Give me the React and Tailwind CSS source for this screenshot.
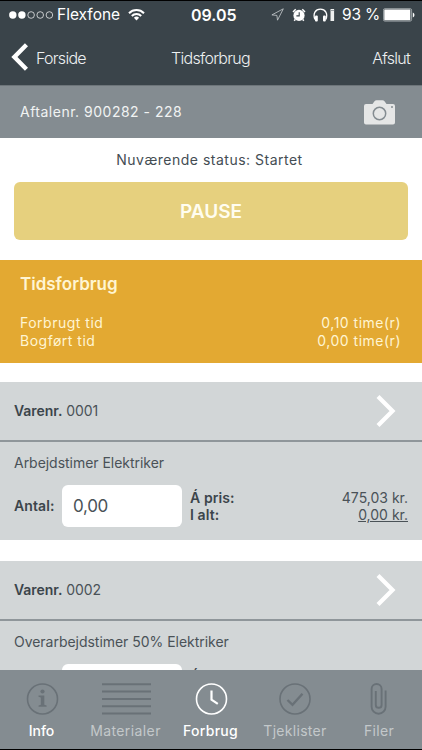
/**
 * Time tracking screen of the field service app.
 */

const items = [
  { id: "0001", name: "Arbejdstimer Elektriker", amount: "0,00", price: "475,03 kr.", total: "0,00 kr." },
  { id: "0002", name: "Overarbejdstimer 50% Elektriker", amount: "0,00", price: "712,55 kr.", total: "0,00 kr." },
];

function StatusBar() {
  return (
    <div className="flex h-[27px] items-center pl-[9px] pr-[7px] text-white">
      {/* Signal strength */}
      <svg width="45" height="10" viewBox="0 0 45 10" fill="none" stroke="white">
        <circle cx="3.8" cy="5" r="3.7" fill="white" stroke="none" />
        <circle cx="12.9" cy="5" r="3.7" fill="white" stroke="none" />
        <circle cx="22.1" cy="5" r="3.3" strokeWidth="0.7" />
        <circle cx="31.2" cy="5" r="3.3" strokeWidth="0.7" />
        <circle cx="40.4" cy="5" r="3.3" strokeWidth="0.7" />
      </svg>
      <span className="ml-[3px] w-[64px] whitespace-nowrap text-[15.5px] leading-5">Flexfone</span>
      <svg className="ml-[7px]" width="17" height="13" viewBox="0 0 17 13" fill="none" stroke="white" strokeWidth="2">
        <path d="M1 5.2a10.6 10.6 0 0 1 15 0" />
        <path d="M3.8 8a6.7 6.7 0 0 1 9.4 0" />
        <path d="M8.5 12.4 5.9 9.8a3.7 3.7 0 0 1 5.2 0Z" fill="white" stroke="none" />
      </svg>
      <span className="ml-[46px] w-[46px] whitespace-nowrap text-base font-semibold leading-5">09.05</span>
      <svg className="ml-[34px]" width="13" height="13" viewBox="0 0 13 13" fill="none" stroke="#c9ced1" strokeWidth="0.8">
        <path d="M12.3.8.9 6.9l5 .5.6 4.8Z" />
      </svg>
      <svg className="ml-[8px]" width="14" height="14" viewBox="0 0 14 14">
        <circle cx="7" cy="7.4" r="5.6" fill="white" />
        <path d="M1 4 3.700 1.300M13 4 10.300 1.300M3.200 11.500 2.200 12.800M10.800 11.500 11.800 12.800" stroke="white" strokeWidth="1.500" />
        <path d="M7.200 4.300v3.600H4.400" stroke="#3a444a" fill="none" strokeWidth="1.1" />
      </svg>
      <svg className="ml-[7px]" width="23" height="14" viewBox="0 0 23 14" fill="none">
        <path d="M2 11.500C-.5 5.500 2.500 1.200 7.400 1.200s7.900 4.300 5.400 10.300" stroke="white" strokeWidth="1.300" />
        <rect x="2" y="7.500" width="2.800" height="6" rx="1" fill="white" />
        <rect x="10" y="7.500" width="2.800" height="6" rx="1" fill="white" />
        <rect x="17.500" y="1" width="3.600" height="12" fill="#eef0f0" />
        <path d="M17.500 2.500h3.600" stroke="#9ba1a5" strokeWidth="1" />
      </svg>
      <span className="ml-[6px] w-[37px] whitespace-nowrap text-[15.500px] leading-5 tracking-[-0.2px]">93 %</span>
      <svg className="ml-[4px]" width="32" height="14" viewBox="0 0 32 14">
        <rect x="0.400" y="0.700" width="28.200" height="12.400" rx="1.500" fill="none" stroke="#b4babd" strokeWidth="0.800" />
        <rect x="1.300" y="1.500" width="26" height="10.800" rx="0.500" fill="white" />
        <path d="M29.800 4.500c2.200.7 2.200 4.300 0 5Z" fill="white" />
      </svg>
    </div>
  );
}

function NavBar() {
  return (
    <div className="grid h-[58px] grid-cols-3 items-center pl-[11px] pr-[12px] text-base font-light tracking-[-0.72px] text-[#edf0f1]">
      <div className="flex items-center">
        <svg width="17" height="28" viewBox="0 0 17 28" fill="none" stroke="white" strokeWidth="4.400">
          <path d="M15.500 1.700 3.400 14l12.100 12.300" />
        </svg>
        <span className="ml-[8px] mt-[2px]">Forside</span>
      </div>
      <span className="mt-[2px] text-center">Tidsforbrug</span>
      <span className="mt-[2px] text-right">Afslut</span>
    </div>
  );
}

function ItemCard({ item }) {
  return (
    <section className="h-[158px] shrink-0 bg-[#d2d6d7] text-sm text-[#4a5257]">
      <div className="flex h-[60px] items-center justify-between border-b-2 border-[#8f969a] pb-px pl-[14px] pr-[26px]">
        <p className="tracking-[-0.05px]">
          <b className="font-semibold text-[#3b454b]">Varenr.</b> {item.id}
        </p>
        <svg width="20" height="32" viewBox="0 0 20 32" fill="none" stroke="white" strokeWidth="4.200">
          <path d="M2 1.500 16.500 16 2 30.500" />
        </svg>
      </div>
      <p className="mt-[11px] pl-[14px] leading-5 tracking-[-0.03px]">{item.name}</p>
      <div className="mt-[12px] flex items-center pl-[14px] pr-[14px]">
        <b className="w-[48px] whitespace-nowrap font-semibold text-[#3b454b] tracking-[0.1px]">Antal:</b>
        <div className="flex h-[42px] w-[120px] items-center rounded-md bg-white pl-[11px] text-[17px] tracking-[-0.3px]">{item.amount}</div>
        <div className="-mt-px ml-2 flex-1 leading-[17px]">
          <div className="flex justify-between">
            <b className="font-semibold text-[#3b454b] tracking-[0.1px]">Á pris:</b>
            <span>{item.price}</span>
          </div>
          <div className="flex justify-between">
            <b className="font-semibold text-[#3b454b] tracking-[0.1px]">I alt:</b>
            <span className="underline">{item.total}</span>
          </div>
        </div>
      </div>
    </section>
  );
}

function Tab({ label, className, children }) {
  return (
    <div className={`flex flex-col items-center ${className}`}>
      <svg width="50" height="34" viewBox="0 0 50 34" fill="none" stroke="currentColor" strokeWidth="1.600">
        {children}
      </svg>
      <span className="mt-[5px] whitespace-nowrap text-sm leading-5 tracking-[0.3px]">{label}</span>
    </div>
  );
}

function TabBar() {
  return (
    <nav className="flex h-[80px] shrink-0 border-b border-black bg-[#848c91] pt-[12px] text-[#697177]">
      <Tab label={<span className="font-medium tracking-normal text-white">Info</span>} className="w-[83px]">
        <circle cx="25.500" cy="17" r="15" />
        <circle cx="25.500" cy="9.500" r="2.100" fill="currentColor" stroke="none" />
        <path d="M21.500 13.500h5.800v9.300l2.300.8v1.100h-8v-1.100l2.200-.8v-7.400l-2.300-.7Z" fill="currentColor" stroke="none" />
      </Tab>
      <Tab label={<span className="tracking-[0.4px] text-[#c3c8ca]">Materialer</span>} className="w-[85px]">
        <path d="M1 2.200h49M1 9.500h49M1 16.900h49M1 24.200h49M1 31.600h49" strokeWidth="2" />
      </Tab>
      <Tab label={<span className="font-medium">Forbrug</span>} className="w-[85px] text-white">
        <circle cx="25.500" cy="17" r="15" />
        <path d="M25.500 8.500v9.200l6.300 4.200" strokeWidth="2.200" />
      </Tab>
      <Tab label={<span className="text-[#c3c8ca]">Tjeklister</span>} className="w-[84px]">
        <circle cx="25" cy="17" r="15" />
        <path d="m17.500 18 5 4.800 10-11" strokeWidth="2.400" />
      </Tab>
      <Tab label={<span className="text-[#c3c8ca]">Filer</span>} className="w-[84px]">
        <path d="M31.600 8.500v16.200a7 7 0 0 1-14 0V7a5 5 0 0 1 10 0v15.900a2.900 2.900 0 0 1-5.800 0V9" strokeWidth="1.900" />
      </Tab>
    </nav>
  );
}

export default function App() {
  return (
    <div className="flex h-[750px] w-[422px] flex-col overflow-hidden bg-white font-['Inter',sans-serif] text-sm">
      <header className="h-[85px] shrink-0 border-t border-black bg-[#3a444a]">
        <StatusBar />
        <NavBar />
      </header>
      <div className="flex h-[53px] shrink-0 items-center justify-between border-t border-[#6d757a] bg-[#848c91] pl-[20px] pr-[27px] text-[#f1f3f3]">
        <span className="tracking-[0.5px]">Aftalenr. 900282 - 228</span>
        <svg width="31" height="25" viewBox="0 0 31 25" fill="#e5e6e6">
          <path d="M2 4h6.500l2-2.700Q11.300.3 12.500.3h6q1.200 0 2 1L22.500 4H29q2 0 2 2v16.500q0 2-2 2H2q-2 0-2-2V6q0-2 2-2Z" />
          <circle cx="15.500" cy="13.500" r="6.200" fill="none" stroke="#848c91" strokeWidth="1.500" />
          <circle cx="28" cy="7" r="1" fill="#848c91" />
        </svg>
      </div>

      <main className="flex min-h-0 flex-1 flex-col overflow-hidden">
        <p className="mt-[12px] shrink-0 pr-[3px] text-center leading-5 tracking-[0.5px] text-[#444d53]">Nuværende status: Startet</p>
        <button className="mx-[14px] mt-[12px] h-[58px] shrink-0 rounded-md bg-[#e6d07e] pt-[2px] text-[19px] font-semibold text-[#fffdf0]">
          PAUSE
        </button>

        <section className="mt-[20px] h-[103px] shrink-0 bg-[#e3a932] pl-[20px] pr-[21px] pt-[12px] text-[#fff5d2]">
          <h2 className="text-[17px] font-semibold leading-6">Tidsforbrug</h2>
          <div className="mt-[18px] leading-[18px] tracking-[0.5px]">
            <div className="flex justify-between">
              <span>Forbrugt tid</span>
              <span>0,10 time(r)</span>
            </div>
            <div className="flex justify-between">
              <span>Bogført tid</span>
              <span>0,00 time(r)</span>
            </div>
          </div>
        </section>

        <div className="mt-[19px] flex flex-col gap-[21px]">
          {items.map((item) => (
            <ItemCard key={item.id} item={item} />
          ))}
        </div>
      </main>
      <TabBar />
    </div>
  );
}
